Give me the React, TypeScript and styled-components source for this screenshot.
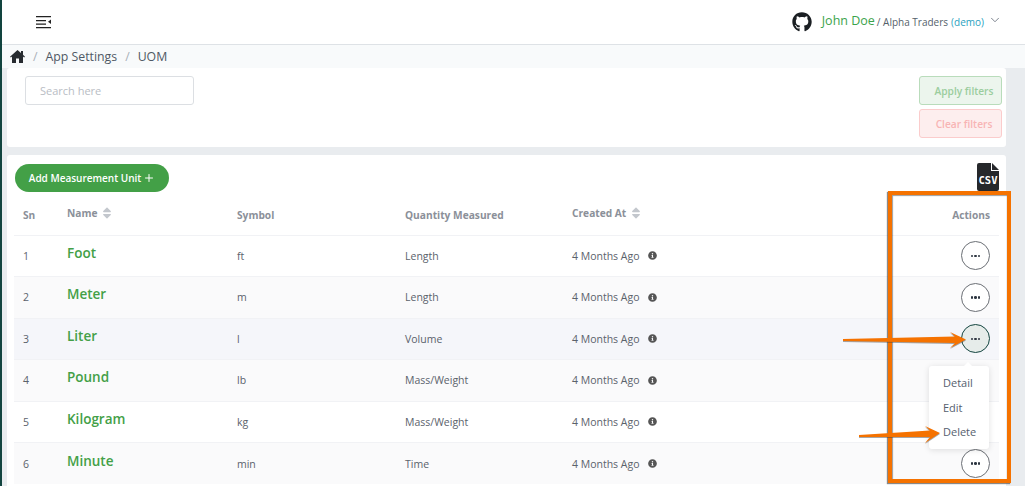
import styled, { createGlobalStyle } from 'styled-components'
import { FaGithub, FaInfoCircle, FaSort } from 'react-icons/fa'
import { FiChevronDown, FiPlus } from 'react-icons/fi'

const GlobalStyle = createGlobalStyle`
  html, body {
    margin: 0;
    padding: 0;
    height: 100%;
    overflow: hidden;
    background: #fff;
    font-family: "Open Sans", "Noto Sans", sans-serif;
  }
`

const Page = styled.div`
  position: relative;
  width: 1025px;
  height: 486px;
  overflow: hidden;
  border-left: 2px solid #12443f;
  box-sizing: border-box;
  background: #e9ecef;
  display: flex;
  flex-direction: column;
`

const Header = styled.header`
  height: 44px;
  flex-shrink: 0;
  background: #fff;
  border-bottom: 1px solid #dee2e6;
  display: flex;
  align-items: center;
  justify-content: space-between;
  padding: 0 23px 0 34px;
`

const User = styled.div`
  display: flex;
  align-items: center;
  color: #555f6b;
  font-size: 10px;
  margin-top: -1px;
`

const UserName = styled.span`
  color: #3ba34a;
  font-size: 12.5px;
  margin: -3px 2px 0 10px;
`

const Demo = styled.span`
  color: #2a9fc0;
  margin-left: 3px;
`

const Crumbs = styled.nav`
  height: 23px;
  flex-shrink: 0;
  background: #f8fafb;
  display: flex;
  align-items: center;
  padding-left: 8px;
  color: #4f5864;
  font-size: 12.3px;
`

const Slash = styled.span`
  color: #a9b0b8;
  margin: 0 8px;
`

const Content = styled.div`
  padding-left: 5px;
  width: 999px;
  display: flex;
  flex-direction: column;
  gap: 8px;
`

const FilterCard = styled.section`
  height: 79px;
  background: #fff;
  border-radius: 3px;
  display: flex;
  justify-content: space-between;
  padding: 8px 4px 0 18px;
  box-sizing: border-box;
`

const Search = styled.input`
  width: 169px;
  height: 29px;
  box-sizing: border-box;
  border: 1px solid #dcdfe3;
  border-radius: 3px;
  padding: 0 14px;
  font: 11px "Open Sans", sans-serif;
  &::placeholder {
    color: #b9bdc4;
  }
`

const FilterButtons = styled.div`
  display: flex;
  flex-direction: column;
  gap: 4px;
`

const FilterButton = styled.button<{ $tone: 'green' | 'red' }>`
  width: 83px;
  height: 29px;
  padding: 0 0 0 7px;
  text-align: center;
  font: 600 10.2px "Open Sans", sans-serif;
  border-radius: 3px;
  color: ${p => (p.$tone === 'green' ? '#9bcd9e' : '#f8b4b4')};
  background: ${p => (p.$tone === 'green' ? '#ecf5ed' : '#fdeeee')};
  border: 1px solid ${p => (p.$tone === 'green' ? '#b9dcbb' : '#fbcccc')};
`

const TableCard = styled.section`
  background: #fff;
  border-radius: 3px 3px 0 0;
  height: 340px;
  padding: 9px 7px 0 7px;
  box-sizing: border-box;
  position: relative;
`

const AddButton = styled.button`
  height: 28px;
  width: 154px;
  margin-left: 1px;
  border: none;
  border-radius: 14px;
  background: #43a047;
  color: #fff;
  font: 600 10px "Open Sans", sans-serif;
  display: flex;
  align-items: center;
  justify-content: center;
  gap: 2px;
  padding: 0;
`

const CsvIcon = styled.svg`
  position: absolute;
  top: 8px;
  right: 7px;
`

const Table = styled.table`
  width: 985px;
  margin-top: 4px;
  border-collapse: collapse;
  table-layout: fixed;
`

const Th = styled.th<{ $w?: number; $right?: boolean }>`
  width: ${p => (p.$w ? `${p.$w}px` : 'auto')};
  height: 39px;
  padding: 0 9px;
  text-align: ${p => (p.$right ? 'right' : 'left')};
  font-size: 10.2px;
  font-weight: 700;
  color: #8b9099;
  box-sizing: border-box;
`

const Raised = styled.span`
  display: inline-flex;
  align-items: center;
  gap: 3px;
  position: relative;
  top: -2px;
`

const Row = styled.tr<{ $bg: string }>`
  height: 41.5px;
  background: ${p => p.$bg};
  border-top: 1px solid #f1f2f5;
`

const Td = styled.td`
  padding: 0 9px;
  font-size: 10.5px;
  color: #5b626c;
  position: relative;
`

const NameLink = styled.a`
  color: #43a047;
  font-size: 13.5px;
  font-weight: 600;
  position: relative;
  top: -3px;
`

const Ago = styled.span`
  display: inline-flex;
  align-items: center;
  gap: 8px;
`

const ActionCell = styled(Td)`
  text-align: right;
  padding-right: 9px;
`

const DotsButton = styled.button<{ $active?: boolean; $covered?: boolean }>`
  width: 29px;
  height: 29px;
  border-radius: 50%;
  border: 1px solid ${p => (p.$active ? '#12443f' : '#6b6f75')};
  background: ${p => (p.$active ? '#e6ecea' : '#fff')};
  color: #2c3540;
  padding: 0;
  display: inline-flex;
  align-items: center;
  justify-content: center;
  gap: 1px;
  vertical-align: middle;
  visibility: ${p => (p.$covered ? 'hidden' : 'visible')};
`

const Dot = styled.i`
  width: 2.5px;
  height: 2.5px;
  border-radius: 50%;
  background: #2c3540;
`

const Menu = styled.div`
  position: absolute;
  top: 366px;
  left: 927px;
  width: 60px;
  height: 83px;
  background: #fff;
  border-radius: 3px;
  box-shadow: 0 1px 6px rgba(0, 0, 0, 0.12);
  padding: 9px 0 0 14px;
  box-sizing: border-box;
  display: flex;
  flex-direction: column;
  gap: 8px;
  font-size: 11px;
  line-height: 16.5px;
  color: #55606e;
  &::before {
    content: '';
    position: absolute;
    top: -4px;
    left: 34px;
    border-left: 5px solid transparent;
    border-right: 5px solid transparent;
    border-bottom: 5px solid #fff;
  }
`

const Highlight = styled.div`
  position: absolute;
  top: 191px;
  left: 886px;
  width: 123px;
  height: 292px;
  box-sizing: border-box;
  border: 4px solid #f57200;
  box-shadow: -1px 1px 1px rgba(60, 60, 60, 0.6), inset 1px 1px 1px rgba(60, 60, 60, 0.5);
  pointer-events: none;
`

const Arrow = styled.svg<{ $left: number; $top: number }>`
  position: absolute;
  left: ${p => p.$left}px;
  top: ${p => p.$top}px;
  pointer-events: none;
  filter: drop-shadow(0 1px 0 rgba(60, 60, 60, 0.45));
`

const rows = [
  ['Foot', 'ft', 'Length'],
  ['Meter', 'm', 'Length'],
  ['Liter', 'l', 'Volume'],
  ['Pound', 'lb', 'Mass/Weight'],
  ['Kilogram', 'kg', 'Mass/Weight'],
  ['Minute', 'min', 'Time'],
]

const rowColors = ['#fff', '#fafafb', '#f5f6fa', '#fafafb', '#fff', '#fafafb']

const SortIcon = () => <FaSort size={14} color="#c3c7cd" />

const App = () => {
  return (
    <Page>
      <GlobalStyle />
      <Header>
        <svg width="15" height="14" viewBox="0 0 15 14">
          <path d="M0 1h15v1.200H0zM0 5h10v1.200H0zM0 8.500h10v1.200H0zM0 12h15v1.200H0z" fill="#222" />
          <path d="M15 4.500v4.500l-3-2.200z" fill="#222" />
        </svg>
        <User>
          <FaGithub size={20} color="#1b1f23" />
          <UserName>John Doe</UserName>
          / Alpha Traders <Demo>(demo)</Demo>
          <FiChevronDown size={14} strokeWidth={1.5} color="#6b7480" style={{ marginLeft: 4, marginTop: -3 }} />
        </User>
      </Header>
      <Crumbs>
        <svg width="15" height="13" viewBox="0 0 15 13">
          <path d="M7.500 0L11 3V1h2v3.800l2 1.900-.9.9-1.100-1V13H9V8.500H6V13H2V6.600l-1.100 1-.9-.9z" fill="#272b30" />
        </svg>
        <Slash>/</Slash>
        App Settings
        <Slash>/</Slash>
        UOM
      </Crumbs>
      <Content>
        <FilterCard>
          <Search placeholder="Search here" />
          <FilterButtons>
            <FilterButton $tone="green">Apply filters</FilterButton>
            <FilterButton $tone="red">Clear filters</FilterButton>
          </FilterButtons>
        </FilterCard>
        <TableCard>
          <AddButton>
            Add Measurement Unit <FiPlus size={12} />
          </AddButton>
          <CsvIcon width="22" height="28" viewBox="0 0 22 28">
            <path d="M2 0h12v8h8v18a2 2 0 0 1-2 2H2a2 2 0 0 1-2-2V2a2 2 0 0 1 2-2z" fill="#26282b" />
            <path d="M15 0l7 7h-7z" fill="#26282b" />
            <text x="11" y="21" textAnchor="middle" fontFamily="DejaVu Sans Mono, monospace" fontWeight="700" fontSize="10.500" fill="#fff">CSV</text>
          </CsvIcon>
          <Table>
            <thead>
              <tr>
                <Th $w={44}>Sn</Th>
                <Th $w={170}><Raised>Name <SortIcon /></Raised></Th>
                <Th $w={168}>Symbol</Th>
                <Th $w={167}>Quantity Measured</Th>
                <Th $w={200}><Raised>Created At <SortIcon /></Raised></Th>
                <Th $right>Actions</Th>
              </tr>
            </thead>
            <tbody>
              {rows.map(([name, symbol, quantity], i) => (
                <Row key={name} $bg={rowColors[i]}>
                  <Td>{i + 1}</Td>
                  <Td><NameLink>{name}</NameLink></Td>
                  <Td>{symbol}</Td>
                  <Td>{quantity}</Td>
                  <Td>
                    <Ago>4 Months Ago <FaInfoCircle size={9} color="#555" /></Ago>
                  </Td>
                  <ActionCell>
                    <DotsButton $active={i === 2} $covered={i === 3 || i === 4}><Dot /><Dot /><Dot /></DotsButton>
                  </ActionCell>
                </Row>
              ))}
            </tbody>
          </Table>
        </TableCard>
      </Content>
      <Menu>
        <span>Detail</span>
        <span>Edit</span>
        <span>Delete</span>
      </Menu>
      <Highlight />
      <Arrow $left={841} $top={330} width="124" height="20" viewBox="0 0 124 20">
        <path d="M0 9L112 6.500 107 2 123 9.500 107 18 112 13 0 11z" fill="#f57200" />
      </Arrow>
      <Arrow $left={857} $top={424} width="84" height="21" viewBox="0 0 84 21">
        <path d="M0 11L71 6.500 66 2 81 9 66 19 71 13 0 13z" fill="#f57200" />
      </Arrow>
    </Page>
  )
}

export default App
